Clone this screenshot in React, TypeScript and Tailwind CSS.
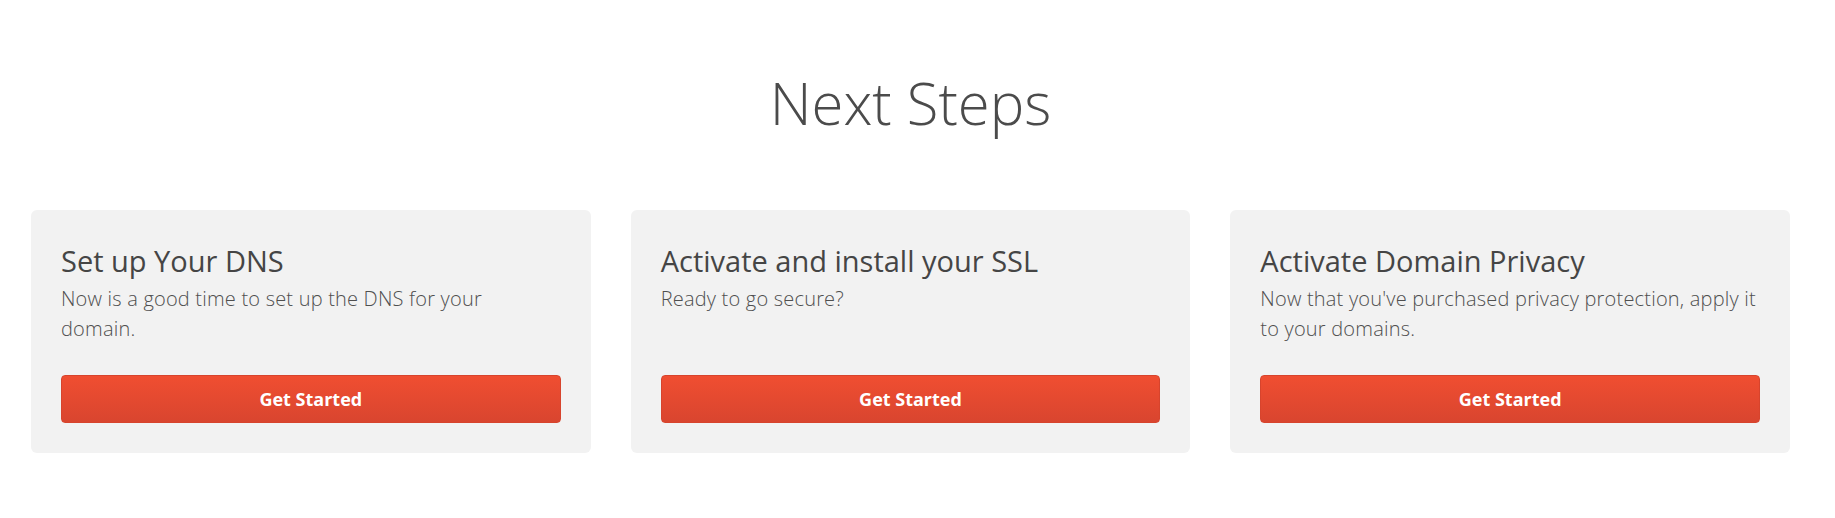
import React from 'react';

const steps = [
  {
    title: 'Set up Your DNS',
    text: 'Now is a good time to set up the DNS for your domain.',
  },
  {
    title: 'Activate and install your SSL',
    text: 'Ready to go secure?',
  },
  {
    title: 'Activate Domain Privacy',
    text: "Now that you've purchased privacy protection, apply it to your domains.",
  },
];

const App: React.FC = () => {
  return (
    <div className="min-h-[518px] bg-white font-['Open_Sans','Noto_Sans',sans-serif] text-[#4a4a4a]">
      <div className="w-[1821px] px-[31px] pt-[68px]">
        <h1 className="text-center text-[58px] leading-[70px] font-light text-[#4b4b4b]">Next Steps</h1>
        <div className="mt-[72px] grid grid-cols-3 gap-10">
          {steps.map((step, i) => (
            <div key={i} className="flex flex-col rounded-md bg-[#f2f2f2] px-[30px] pt-[34px] pb-[30px]">
              <h2 className="text-[29px] leading-[34px] text-[#454545]">{step.title}</h2>
              <p className="mt-[6px] flex-1 text-[20px] leading-[30px] font-light tracking-[0.2px] text-[#4f4f4f]">{step.text}</p>
              <button className="mt-[31px] h-12 w-full rounded border border-[#d7442d] bg-gradient-to-b from-[#f04e31] to-[#d9452f] text-[18px] font-bold text-white">
                Get Started
              </button>
            </div>
          ))}
        </div>
      </div>
    </div>
  );
};

export default App;
